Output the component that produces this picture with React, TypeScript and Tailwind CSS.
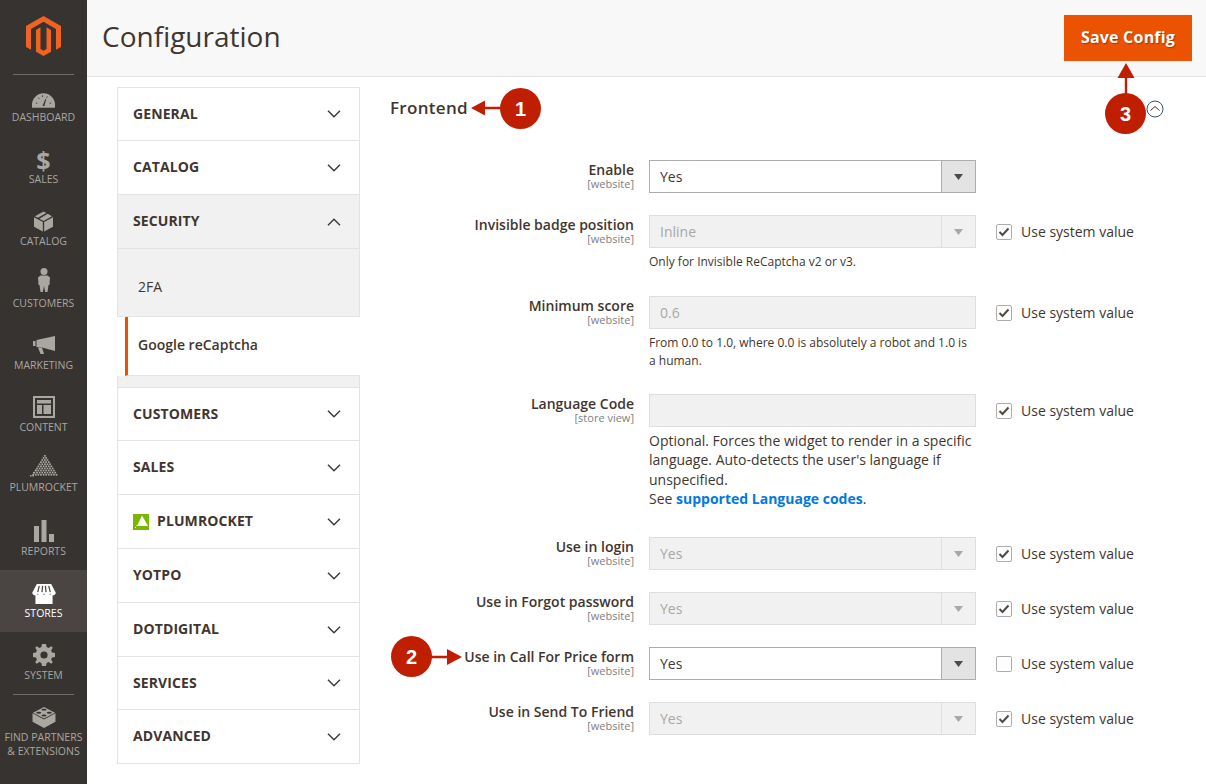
import type { ReactNode } from 'react'

const ink = 'text-[#41362f]'

function Gauge() {
  return (
    <svg width="23" height="16" viewBox="0 0 24 16">
      <path d="M0 16V13a12 12 0 0 1 24 0v3z" fill="currentColor" />
      <path d="M11 14l3-7 .8.4-2 7z" fill="#373330" />
      <g stroke="#373330" strokeWidth="1">
        <path d="M4 11l1.500.6M6.600 5.600l1 1.200M11 3.200v1.600M16 4.400l-.8 1.300M20 11l-1.500.6" />
      </g>
    </svg>
  )
}

function Box() {
  return (
    <svg width="19" height="21" viewBox="0 0 20 21">
      <path d="M0 6l9.300 5v10L0 16zM20 6l-9.300 5v10L20 16z" fill="currentColor" />
      <path d="M10 0l3 1.600L4 6.600 1 5zM14.500 2.400L19 5l-9 4.900-4.400-2.400z" fill="currentColor" />
    </svg>
  )
}

function Person() {
  return (
    <svg width="12" height="24" viewBox="0 0 12 24">
      <circle cx="6" cy="3.500" r="3.500" fill="currentColor" />
      <path d="M2.500 7.500h7L12 9.500l-.5 7.500h-1L9.500 24H7.200L6 18l-1.200 6H2.500l-1-7h-1L0 9.500z" fill="currentColor" />
    </svg>
  )
}

function Megaphone() {
  return (
    <svg width="22" height="18" viewBox="0 0 22 18">
      <path d="M0 5h2.500v5H0zM3.500 4L22 0v15L9 11.500 3.500 11z" fill="currentColor" />
      <path d="M5 11.500h4l2 6.500H7.500z" fill="currentColor" />
    </svg>
  )
}

function Layout() {
  return (
    <svg width="22" height="22" viewBox="0 0 22 22">
      <path fillRule="evenodd" d="M0 0h22v22H0zM2 2v18h18V2z" fill="currentColor" />
      <path d="M4 4h14v3.500H4zM4 9h5v9H4zM10.500 9H18v9h-7.500z" fill="currentColor" />
    </svg>
  )
}

// dotted pyramid, rows of dots getting wider toward the base
function Pyramid() {
  const dots: ReactNode[] = []
  for (let row = 0; row < 10; row++) {
    const count = row + 1
    for (let i = 0; i < count; i++) {
      dots.push(<rect key={`${row}-${i}`} x={14 - row * 1.3 + i * 2.6} y={row * 2.1} width="1.7" height="1.7" fill="currentColor" />)
    }
  }
  return (
    <svg width="28" height="22" viewBox="0 0 28 22">
      {dots}
      <rect x="0" y="20" width="1.500" height="1.500" fill="currentColor" />
      <rect x="3" y="17" width="1.500" height="1.500" fill="currentColor" />
      <rect x="5" y="14.500" width="1.500" height="1.500" fill="currentColor" />
      <rect x="2.500" y="20" width="1.500" height="1.500" fill="currentColor" />
    </svg>
  )
}

function Bars() {
  return (
    <svg width="20" height="22" viewBox="0 0 20 22">
      <path d="M0 6h5v16H0zM7.500 0h5v22h-5zM15 14h5v8h-5z" fill="currentColor" />
    </svg>
  )
}

function Store() {
  return (
    <svg width="24" height="20" viewBox="0 0 25 21">
      <path d="M3.500 11h18v10h-18z" fill="currentColor" />
      <path d="M5 0h15l5 9.500q-1 2.500-3 2.500t-3-2q-1 2-3 2t-3.500-2q-1.500 2-3.500 2t-3-2q-1 2-3 2T0 9.500z" fill="currentColor" />
      <path d="M7.500 2L6 8.500M11 2l-.6 6.500M14 2l.6 6.500M17.500 2L19 8.500" stroke="#4a4542" strokeWidth="1.300" />
    </svg>
  )
}

function Gear() {
  return (
    <svg width="22" height="22" viewBox="0 0 22 22">
      <path
        fillRule="evenodd"
        d="M9 0h4l.6 3 2 .9L18.200 2.200 19.800 3.800 18.100 6.400l.9 2 3 .6v4l-3 .6-.9 2 1.700 2.600-1.600 1.600-2.600-1.700-2 .9-.6 3H9l-.6-3-2-.9-2.600 1.700-1.600-1.600 1.700-2.600-.9-2-3-.6V9l3-.6.9-2-1.700-2.600L3.800 2.200l2.600 1.700 2-.9zM11 7.400a3.600 3.600 0 1 0 0 7.200 3.600 3.600 0 0 0 0-7.200z"
        fill="currentColor"
      />
    </svg>
  )
}

function Brick() {
  return (
    <svg width="24" height="22" viewBox="0 0 24 23">
      <path d="M0 7.500L12 14v9L0 16.500zM24 7.500L12 14v9l12-6.500z" fill="currentColor" />
      <path d="M12 1l11.500 6L12 13 .5 7z" fill="currentColor" />
      <g fill="#373330">
        <ellipse cx="12" cy="3.800" rx="2.600" ry="1" />
        <ellipse cx="6.500" cy="7" rx="2.600" ry="1" />
        <ellipse cx="17.500" cy="7" rx="2.600" ry="1" />
        <ellipse cx="12" cy="10" rx="2.600" ry="1" />
      </g>
    </svg>
  )
}

function NavItem({ icon, label, active, iconClass = '', labelClass = 'mt-[2px]' }: {
  icon: ReactNode
  label: string
  active?: boolean
  iconClass?: string
  labelClass?: string
}) {
  return (
    <div className={`h-[62px] flex-shrink-0 flex flex-col items-center ${active ? 'bg-[#4a4542] text-white' : 'text-[#aaa6a0]'}`}>
      <div className={`h-[33px] mt-[1px] flex items-end justify-center ${iconClass}`}>{icon}</div>
      <span className={`text-[10.500px] leading-[14px] whitespace-nowrap ${labelClass}`}>{label}</span>
    </div>
  )
}

function Sidebar() {
  return (
    <aside className="w-[87px] flex-shrink-0 bg-[#373330] flex flex-col">
      <div className="h-[75px] -mb-[1px] flex-shrink-0 pt-[16px] flex justify-center border-b border-[#6f6b67] mx-[13px]">
        <svg width="35" height="40" viewBox="0 0 35 40">
          <path d="M17.500 0L35 10v21l-5 2.800V13L17.500 5.800 5 13v20.800L0 31V10z" fill="#f26322" />
          <path d="M17.500 40L10 35.700V13.900l4.500-2.600V33l3 1.800 3-1.800V11.300l4.500 2.600v21.800z" fill="#f26322" />
        </svg>
      </div>
      <NavItem icon={<Gauge />} label="DASHBOARD" />
      <NavItem icon={<span className="text-[25px] leading-[20px] font-bold">$</span>} label="SALES" />
      <NavItem icon={<Box />} label="CATALOG" />
      <NavItem icon={<Person />} iconClass="pb-[2px]" label="CUSTOMERS" />
      <NavItem icon={<Megaphone />} iconClass="pb-[2px]" label="MARKETING" />
      <NavItem icon={<Layout />} label="CONTENT" />
      <NavItem icon={<Pyramid />} iconClass="pb-[3px]" labelClass="mt-0" label="PLUMROCKET" />
      <NavItem icon={<Bars />} label="REPORTS" />
      <NavItem icon={<Store />} label="STORES" active />
      <NavItem icon={<Gear />} label="SYSTEM" />
      <div className="mx-[13px] border-t border-[#6f6b67]" />
      <div className="flex flex-col items-center text-[#aaa6a0] pt-[11px]">
        <Brick />
        <span className="mt-[2px] text-[10.500px] leading-[14px] whitespace-nowrap">FIND PARTNERS</span>
        <span className="text-[10.500px] leading-[14px] whitespace-nowrap">&amp; EXTENSIONS</span>
      </div>
    </aside>
  )
}

function Chevron({ up }: { up?: boolean }) {
  return (
    <svg width="14" height="8" viewBox="0 0 14 8" fill="none" stroke="#41362f" strokeWidth="1.400" className="flex-shrink-0">
      <path d={up ? 'M1 7.300L7 1.300l6 6' : 'M1 .7l6 6 6-6'} />
    </svg>
  )
}

function TabHead({ label, h, open, icon }: { label: string; h: string; open?: boolean; icon?: ReactNode }) {
  return (
    <div className={`${h} flex items-center pl-[15px] pr-[18px] border-b border-[#e3e3e3] ${open ? 'bg-[#f1f1f1]' : 'bg-white'}`}>
      {icon}
      <span className={`flex-1 mb-[2px] text-[14px] font-bold tracking-[0.1px] ${ink}`}>{label}</span>
      <Chevron up={open} />
    </div>
  )
}

function Tabs() {
  return (
    <div className="w-[243px] flex-shrink-0 border-x border-t border-[#e3e3e3] self-start">
      <TabHead label="GENERAL" h="h-[53px]" />
      <TabHead label="CATALOG" h="h-[54px]" />
      <TabHead label="SECURITY" h="h-[54px]" open />
      <div className={`h-[68px] bg-[#f1f1f1] border-b border-[#e3e3e3] flex items-center pl-[20px] pt-[8px] text-[14px] ${ink}`}>2FA</div>
      <div className="h-[59px] -mx-[1px] pl-[8px] flex bg-white">
        <div className="flex-1 border-l-[3px] border-[#eb5202] flex items-center pl-[10px] pb-[4px] text-[14px] font-semibold text-[#41362f] border-b border-b-[#e3e3e3]">
          Google reCaptcha
        </div>
      </div>
      <div className="h-[12px] bg-[#f1f1f1] border-b border-[#e3e3e3]" />
      <TabHead label="CUSTOMERS" h="h-[53px]" />
      <TabHead label="SALES" h="h-[54px]" />
      <TabHead
        label="PLUMROCKET"
        h="h-[54px]"
        icon={
          <svg width="16" height="16" viewBox="0 0 16 16" className="mr-[8px] flex-shrink-0">
            <rect width="16" height="16" fill="#7ab800" />
            <path d="M9 1.500L15 12H4z" fill="#ffffff" />
            <path d="M2 13h1v1H2zM3.500 11h1v1h-1zM5 9.500h1v1H5z" fill="#ffffff" />
          </svg>
        }
      />
      <TabHead label="YOTPO" h="h-[54px]" />
      <TabHead label="DOTDIGITAL" h="h-[54px]" />
      <TabHead label="SERVICES" h="h-[53px]" />
      <TabHead label="ADVANCED" h="h-[54px]" />
    </div>
  )
}

function Control({ value, enabled, select = true }: { value: string; enabled?: boolean; select?: boolean }) {
  return (
    <div className={`h-[33px] w-[327px] flex border ${enabled ? 'border-[#adadad] bg-white text-[#41362f]' : 'border-[#dedede] bg-[#f1f1f1] text-[#a8a8a8]'}`}>
      <span className="flex-1 pl-[10px] text-[14px] leading-[31px]">{value}</span>
      {select && (
        <span className={`w-[34px] flex items-center justify-center border-l ${enabled ? 'border-[#adadad] bg-[#e3e3e3]' : 'border-[#dedede] bg-[#f1f1f1]'}`}>
          <svg width="9" height="6" viewBox="0 0 9 6">
            <path d="M0 0h9L4.500 6z" fill={enabled ? '#514943' : '#a8a8a8'} />
          </svg>
        </span>
      )}
    </div>
  )
}

function UseSystem({ checked }: { checked: boolean }) {
  return (
    <label className="ml-[20px] h-[33px] flex items-center gap-[9px] text-[14px] text-[#41362f]">
      <span className="w-[16px] h-[16px] border border-[#adadad] rounded-[2px] bg-white flex items-center justify-center">
        {checked && (
          <svg width="12" height="10" viewBox="0 0 12 10" fill="none" stroke="#514943" strokeWidth="2">
            <path d="M1.500 5l3 3L10.500 1.500" />
          </svg>
        )}
      </span>
      Use system value
    </label>
  )
}

function Row({ label, scope = '[website]', value, enabled, select, checked = true, inherit = true, note, className = '' }: {
  label: string
  scope?: string
  value: string
  enabled?: boolean
  select?: boolean
  checked?: boolean
  inherit?: boolean
  note?: ReactNode
  className?: string
}) {
  return (
    <div className={`flex items-start ${className}`}>
      <div className="w-[244px] flex-shrink-0 text-right pt-[2px]">
        <div className="text-[14px] leading-[16px] font-semibold text-[#41362f]">{label}</div>
        <div className="text-[11px] leading-[11px] text-[#808080]">{scope}</div>
      </div>
      <div className="w-[327px] ml-[15px] flex-shrink-0">
        <Control value={value} enabled={enabled} select={select} />
        {note}
      </div>
      {inherit && <UseSystem checked={checked} />}
    </div>
  )
}

function Form() {
  return (
    <div className="w-[780px] ml-[30px] flex-shrink-0 pt-[8px]">
      <div className="flex items-center h-[26px]">
        <h2 className={`text-[17px] font-semibold tracking-[0.3px] ${ink}`}>Frontend</h2>
      </div>
      <div className="mt-[39px] flex flex-col">
        <Row label="Enable" value="Yes" enabled inherit={false} />
        <Row
          label="Invisible badge position"
          value="Inline"
          className="mt-[22px]"
          note={<p className="mt-[5px] text-[12px] leading-[18px] text-[#41362f]">Only for Invisible ReCaptcha v2 or v3.</p>}
        />
        <Row
          label="Minimum score"
          value="0.6"
          select={false}
          className="mt-[25px]"
          note={
            <p className="mt-[5px] text-[12px] leading-[18px] text-[#41362f]">
              From 0.0 to 1.0, where 0.0 is absolutely a robot and 1.0 is a human.
            </p>
          }
        />
        <Row
          label="Language Code"
          scope="[store view]"
          value=""
          select={false}
          className="mt-[24px]"
          note={
            <p className="mt-[4px] text-[14px] leading-[19.250px] text-[#41362f]">
              Optional. Forces the widget to render in a specific language. Auto-detects the user's language if unspecified.
              <br />
              See <a className="font-bold text-[#007bdb]">supported Language codes</a>.
            </p>
          }
        />
        <Row label="Use in login" value="Yes" className="mt-[29px]" />
        <Row label="Use in Forgot password" value="Yes" className="mt-[22px]" />
        <Row label="Use in Call For Price form" value="Yes" enabled checked={false} className="mt-[22px]" />
        <Row label="Use in Send To Friend" value="Yes" className="mt-[22px]" />
      </div>
    </div>
  )
}

function Marker({ n, className }: { n: number; className: string }) {
  return (
    <div className={`absolute w-[41px] h-[41px] rounded-full bg-[#bf1e00] text-white flex items-center justify-center text-[20px] font-bold font-['Liberation_Sans',sans-serif] ${className}`}>
      {n}
    </div>
  )
}

export default function App() {
  return (
    <div className="relative w-[1206px] h-[784px] overflow-hidden flex bg-white font-['Open_Sans',sans-serif]">
      <Sidebar />
      <div className="flex-1 min-w-0 flex flex-col">
        <header className="h-[77px] flex-shrink-0 bg-[#f8f8f8] border-b border-[#e3e3e3] flex items-start justify-between pl-[15px] pr-[14px]">
          <h1 className={`mt-[16px] text-[28px] leading-[40px] font-normal ${ink}`}>Configuration</h1>
          <button className="mt-[15px] w-[128px] h-[46px] pb-[2px] bg-[#eb5202] text-white text-[16px] font-bold tracking-[0.2px] [text-shadow:1px_1px_1px_rgba(0,0,0,0.3)]">
            Save Config
          </button>
        </header>
        <div className="flex-1 flex pl-[30px] pt-[10px]">
          <Tabs />
          <Form />
        </div>
      </div>

      {/* collapse toggle */}
      <svg className="absolute left-[1146px] top-[100px]" width="18" height="18" viewBox="0 0 18 18" fill="none">
        <circle cx="9" cy="9" r="8" stroke="#33536f" strokeWidth="1" />
        <path d="M4.500 10.500L9 6.500l4.500 4" stroke="#41362f" strokeWidth="1" />
      </svg>

      {/* annotation arrows */}
      <svg className="absolute left-[470px] top-[98px]" width="32" height="20" viewBox="0 0 32 20">
        <path d="M1 10L15 2.500v6.300h17v2.400H15v6.300z" fill="#bf1e00" />
      </svg>
      <svg className="absolute left-[429px] top-[647px]" width="34" height="20" viewBox="0 0 34 20">
        <path d="M33 10L18 2v6.800H0v2.400h18V18z" fill="#bf1e00" />
      </svg>
      <svg className="absolute left-[1116px] top-[63px]" width="20" height="32" viewBox="0 0 20 32">
        <path d="M10 0L18.500 15h-7.300v17H8.800V15H1.500z" fill="#bf1e00" />
      </svg>
      <Marker n={1} className="left-[500px] top-[88px]" />
      <Marker n={2} className="left-[391px] top-[636px]" />
      <Marker n={3} className="left-[1105px] top-[93px]" />
    </div>
  )
}
